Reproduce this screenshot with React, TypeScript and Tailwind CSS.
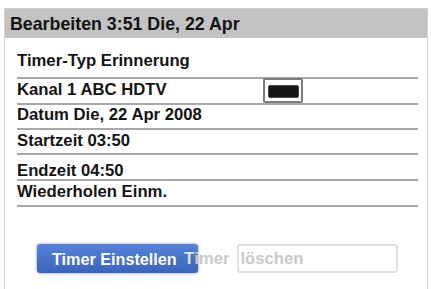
import React from "react";

const Sep = () => <div className="h-[2px] bg-[#a9a9a9]" />;

export default function App() {
  return (
    <div
      className="w-[431px] h-[289px] bg-white pt-[8px] pl-[4px] pr-[3px] overflow-hidden text-[#141414]"
      style={{ fontFamily: '"Liberation Sans", Arial, sans-serif' }}
    >
      <div className="h-[281px] border-x border-t border-[#d2d2d2] flex flex-col">
        <div className="h-[29px] bg-[#c3c3c3] flex items-center pl-[5px] text-[17.8px] font-bold leading-[16px]">
          Bearbeiten 3:51 Die, 22 Apr
        </div>
        <div className="pl-[12px] pr-[9px] text-[16.7px] font-bold leading-[16px]">
          <div className="pt-[15px] pb-[8px]">Timer-Typ Erinnerung</div>
          <Sep />
          <div className="h-[24px] flex items-start">
            <div className="w-[246px] mt-[3px]">Kanal 1 ABC HDTV</div>
            <div className="relative mt-[-1px] w-[40px] h-[25px] border-2 border-[#7b7b7b] rounded-[2px] bg-white flex items-center justify-center">
              <div className="mt-[2px] w-[31px] h-[13px] rounded-[2px] bg-[#161616] border border-[#4a4a4a]" />
            </div>
          </div>
          <Sep />
          <div className="pt-[2px] pb-[5px]">Datum Die, 22 Apr 2008</div>
          <Sep />
          <div className="pt-[3px] pb-[4px]">Startzeit 03:50</div>
          <Sep />
          <div className="pt-[8px] pb-[0px]">Endzeit 04:50</div>
          <Sep />
          <div className="pt-[3px] pb-[5px]">Wiederholen Einm.</div>
          <Sep />
          <div className="mt-[37px] ml-[20px] flex items-center">
            <div className="w-[161px] h-[29px] rounded-[3px] bg-gradient-to-b from-[#5682d8] to-[#3a63bd] shadow-[0_0_3px_rgba(40,70,150,0.6)] flex items-center pl-[15px] text-white text-[16.2px]">
              Timer Einstellen
            </div>
            <div className="ml-[-14px] flex items-center text-[#c9c9c9]">
              <span className="relative text-[#dfe4ef]">T</span>
              <span>imer</span>
              <div className="ml-[8px] w-[161px] h-[29px] rounded-[3px] border-2 border-[#e0e0e0] flex items-center pl-[1px]">
                löschen
              </div>
            </div>
          </div>
        </div>
      </div>
    </div>
  );
}
